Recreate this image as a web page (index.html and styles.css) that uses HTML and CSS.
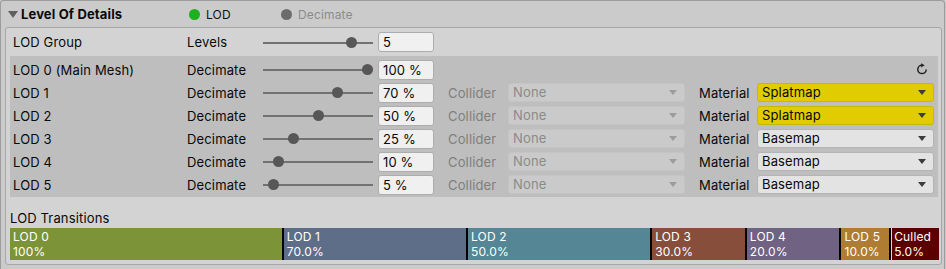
FILE: index.html
```html
<!DOCTYPE html>
<html lang="en">
	<head>
		<title>Level Of Details</title>
		<link rel="stylesheet" href="styles.css">
	</head>

	<body>
		<div class="inspector">
			<div class="foldout">
				<span class="arrow"></span>
				<span class="title">Level Of Details</span>
				<span class="tab active"><span class="dot"></span>LOD</span>
				<span class="tab"><span class="dot"></span>Decimate</span>
			</div>

			<div class="box">
				<div class="row group-row">
					<span class="label">LOD Group</span>
					<span class="label">Levels</span>
					<div class="slider"><span class="thumb" style="left: 83px"></span></div>
					<div class="field">5</div>
				</div>

				<div class="lods">
					<div class="row">
						<span class="label">LOD 0 (Main Mesh)</span>
						<span class="label">Decimate</span>
						<div class="slider"><span class="thumb" style="left: 99px"></span></div>
						<div class="field">100 %</div>
						<svg class="reset" width="12" height="12" viewBox="0 0 12 12">
							<path d="M6 2.2 A4.2 4.2 0 1 0 10.2 6.4" fill="none" stroke="#222" stroke-width="1.5"/>
							<path d="M5.2 0.2 L8.6 2.3 L5.2 4.4 Z" fill="#222"/>
						</svg>
					</div>
					<div class="row">
						<span class="label">LOD 1</span>
						<span class="label">Decimate</span>
						<div class="slider"><span class="thumb" style="left: 69px"></span></div>
						<div class="field">70 %</div>
						<span class="label muted pad">Collider</span>
						<div class="dropdown disabled">None</div>
						<span class="label pad">Material</span>
						<div class="dropdown yellow">Splatmap</div>
					</div>
					<div class="row">
						<span class="label">LOD 2</span>
						<span class="label">Decimate</span>
						<div class="slider"><span class="thumb" style="left: 50px"></span></div>
						<div class="field">50 %</div>
						<span class="label muted pad">Collider</span>
						<div class="dropdown disabled">None</div>
						<span class="label pad">Material</span>
						<div class="dropdown yellow">Splatmap</div>
					</div>
					<div class="row">
						<span class="label">LOD 3</span>
						<span class="label">Decimate</span>
						<div class="slider"><span class="thumb" style="left: 25px"></span></div>
						<div class="field">25 %</div>
						<span class="label muted pad">Collider</span>
						<div class="dropdown disabled">None</div>
						<span class="label pad">Material</span>
						<div class="dropdown">Basemap</div>
					</div>
					<div class="row">
						<span class="label">LOD 4</span>
						<span class="label">Decimate</span>
						<div class="slider"><span class="thumb" style="left: 10px"></span></div>
						<div class="field">10 %</div>
						<span class="label muted pad">Collider</span>
						<div class="dropdown disabled">None</div>
						<span class="label pad">Material</span>
						<div class="dropdown">Basemap</div>
					</div>
					<div class="row">
						<span class="label">LOD 5</span>
						<span class="label">Decimate</span>
						<div class="slider"><span class="thumb" style="left: 5px"></span></div>
						<div class="field">5 %</div>
						<span class="label muted pad">Collider</span>
						<div class="dropdown disabled">None</div>
						<span class="label pad">Material</span>
						<div class="dropdown">Basemap</div>
					</div>
				</div>

				<div class="trans-label">LOD Transitions</div>
				<div class="transitions">
					<div class="seg lod0" style="flex-grow: 30">LOD 0<br>100%</div>
					<div class="seg lod1" style="flex-grow: 20">LOD 1<br>70.0%</div>
					<div class="seg lod2" style="flex-grow: 20">LOD 2<br>50.0%</div>
					<div class="seg lod3" style="flex-grow: 10">LOD 3<br>30.0%</div>
					<div class="seg lod4" style="flex-grow: 10">LOD 4<br>20.0%</div>
					<div class="seg lod5" style="flex-grow: 5">LOD 5<br>10.0%</div>
					<div class="seg culled" style="flex-grow: 5">Culled<br>5.0%</div>
				</div>
			</div>
		</div>
	</body>
</html>
```

FILE: styles.css
```css
/* general styling */
* {
	box-sizing: border-box;
	margin: 0;
	padding: 0;
}

html, body {
	height: 100%;
	overflow: hidden;
}

body {
	background-color: #c8c8c8;
	color: #090909;
	font-family: Inter, "Liberation Sans", sans-serif;
	font-size: 13px;
	letter-spacing: .15px;
}

.inspector {
	background-color: #cbcbcb;
	border: 1px solid #9c9c9c;
	border-bottom: none;
	border-radius: 4px 4px 0 0;
	height: 100%;
	width: 945px;
}

/* header */
.foldout {
	align-items: center;
	display: flex;
	height: 26px;
	padding-left: 6px;
}

.arrow {
	border-left: 5px solid transparent;
	border-right: 5px solid transparent;
	border-top: 7px solid #5f5f5f;
	height: 0;
	margin: 1px 3px 0 1px;
	width: 0;
}

.title {
	font-weight: bold;
	width: 168px;
}

.tab {
	align-items: center;
	color: #8b8b8b;
	display: flex;
	font-size: 12px;
	width: 92px;
}

.tab .dot {
	background-color: #6c6c6c;
	border-radius: 50%;
	height: 11px;
	margin-right: 6px;
	width: 11px;
}

.tab.active {
	color: #111;
}

.tab.active .dot {
	background-color: #1fb020;
}

/* body box */
.box {
	background-color: #d3d3d3;
	border: 1px solid #a6a6a6;
	border-radius: 3px;
	margin: 0 2px 0 4px;
	padding-bottom: 4px;
}

.row {
	align-items: center;
	display: grid;
	grid-template-columns: 174px 76px 110px 61px 74px 177px 72px 177px;
	height: 23px;
	padding-left: 3px;
}

.group-row {
	height: 28px;
	padding-left: 7px;
}

.lods {
	background-color: #bebebe;
	margin: 0 3px 0 4px;
	padding: 2px 0 1px;
}

.label {
	white-space: nowrap;
}

.label.pad {
	padding-left: 14px;
}

.muted {
	color: #7f7f7f;
}

/* slider */
.slider {
	height: 11px;
	position: relative;
}

.slider::before {
	background-color: #727272;
	content: "";
	height: 2px;
	left: 0;
	position: absolute;
	right: 0;
	top: 5px;
}

.thumb {
	background-color: #575757;
	border-radius: 50%;
	height: 11px;
	position: absolute;
	top: 0;
	width: 11px;
}

.field {
	background-color: #f0f0f0;
	border: 1px solid #adadad;
	border-radius: 3px;
	height: 20px;
	line-height: 18px;
	margin-left: 5px;
	padding-left: 4px;
	width: 56px;
}

.reset {
	grid-column: 8;
	justify-self: end;
	margin: -2px 6px 0 0;
}

/* dropdowns */
.dropdown {
	background-color: #e3e3e3;
	border: 1px solid #b4b4b4;
	border-radius: 3px;
	height: 19px;
	line-height: 17px;
	padding-left: 4px;
	position: relative;
}

.dropdown::after {
	border-left: 4px solid transparent;
	border-right: 4px solid transparent;
	border-top: 5px solid #3c3c3c;
	content: "";
	position: absolute;
	right: 7px;
	top: 6px;
}

.dropdown.disabled {
	background-color: #cacaca;
	border-color: #c4c4c4;
	color: #8a8a8a;
}

.dropdown.disabled::after {
	border-top-color: #9c9c9c;
}

.dropdown.yellow {
	background-color: #e0cc00;
	border-color: #c9b800;
}

/* transitions bar */
.trans-label {
	line-height: 16px;
	margin: 13px 0 2px 4px;
}

.transitions {
	background-color: #000;
	color: #fff;
	display: flex;
	font-size: 12px;
	gap: 2px;
	height: 32px;
	margin: 0 2px 0 4px;
}

.seg {
	flex-basis: 0;
	line-height: 15px;
	overflow: hidden;
	padding: 1px 0 0 3px;
	white-space: nowrap;
}

.lod0 { background-color: #7d9337; }
.lod1 { background-color: #5e6e89; }
.lod2 { background-color: #548696; }
.lod3 { background-color: #874f3b; }
.lod4 { background-color: #6f6283; }
.lod5 { background-color: #af7c34; }

.culled {
	background-color: #5a0000;
	box-shadow: inset 1px 0 #d8d8d8;
}
```
